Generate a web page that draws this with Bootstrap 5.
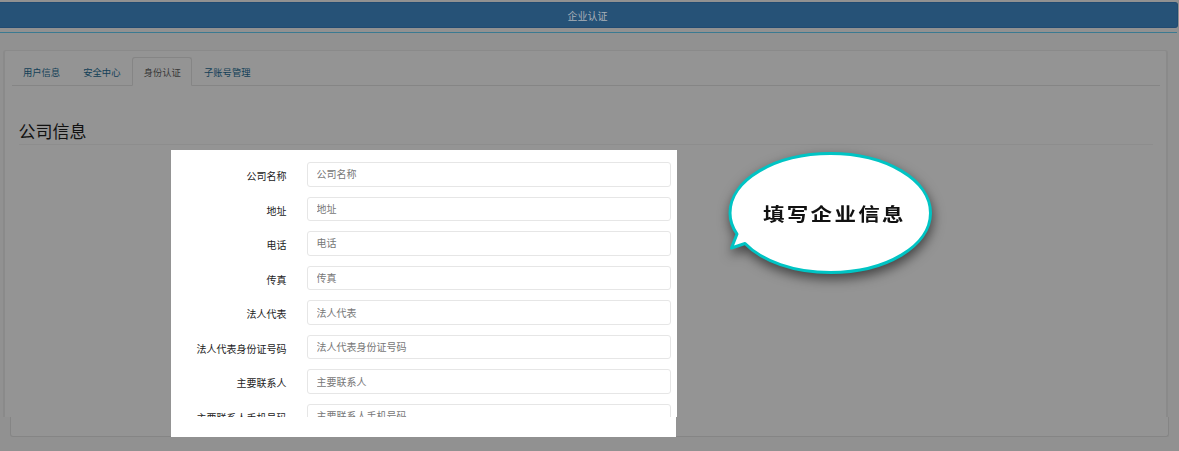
<!DOCTYPE html>
<html lang="zh-CN">
<head>
<meta charset="utf-8">
<meta name="viewport" content="width=device-width, initial-scale=1">
<title>企业认证</title>
<link href="https://cdn.jsdelivr.net/npm/bootstrap@5.3.0/dist/css/bootstrap.min.css" rel="stylesheet">
<style>
body{background:#919191;font-family:"Noto Sans CJK SC",sans-serif;font-size:10px;line-height:15px;color:#222;height:451px;overflow:hidden}
.title-bar{height:26px;margin:2px 1px 0 0;padding-right:2px;background:#265277;border:1px solid #214b72;border-left:0;border-radius:0 3px 3px 0;color:#a9b0b7;line-height:26px}
.title-rule{height:1px;margin:4px 2px 0 0;background:#3b7a91}
.panel-top{height:367px;margin:17px 11px 0 3px;background:#949494;border:solid #8a8a8a;border-width:1px 2px 0;border-radius:3px 3px 0 0;padding:6px 6px 0 7px}
.panel-bottom{height:20px;margin:0 10px 0 10px;background:#949494;border:1px solid #858585;border-top:0;border-radius:0 0 3px 3px;padding-left:160px}
.nav-tabs{--bs-nav-tabs-border-color:#858585;--bs-nav-tabs-border-radius:3px;--bs-nav-tabs-link-active-bg:#949494;--bs-nav-tabs-link-active-color:#383838;--bs-nav-tabs-link-active-border-color:#858585 #858585 #949494;--bs-nav-link-color:#123f57;--bs-nav-link-padding-x:10.2px;--bs-nav-link-padding-y:0;font-size:9.3px;height:29px;column-gap:.8px;margin-left:-.3px}
.nav-tabs .nav-link{height:29px;line-height:28px;margin-right:0;font-size:9.3px}
.section-title{font-size:17px;line-height:24px;margin:33px 7px 0 6.500px;height:26px;border-bottom:1px solid #8d8d8d;color:#111}
.form-area{width:506px;height:267px;margin:5px 0 0 159px;padding-top:12px;background:#fff;overflow:hidden}
.form-line{height:34.57px}
.form-line label{width:115.5px;color:#1c1c1c;padding-top:6px}
.form-line .form-control{width:364px;height:24.6px;margin-left:20.5px;padding:0 8.500px 1px;font-family:inherit;font-size:10px;line-height:20px;border:1px solid #e6e6e6;border-radius:3px}
.form-control::placeholder{color:#777;opacity:1}
.form-foot{width:505px;height:20px;background:#fff}
.bubble{left:714px;top:140px;width:236px;height:160px}
.bubble svg{display:block}
.bubble-text{left:49px;top:61px;width:150px;font-size:21.5px;line-height:24px;letter-spacing:2.3px;font-weight:700;color:#111;white-space:nowrap;transform:scaleY(.84)}
</style>
</head>
<body class="position-relative">
<header class="overflow-hidden">
  <div class="title-bar text-center">企业认证</div>
  <div class="title-rule"></div>
</header>
<main>
  <section class="panel-top">
    <ul class="nav nav-tabs">
      <li class="nav-item"><a class="nav-link" href="#">用户信息</a></li>
      <li class="nav-item"><a class="nav-link" href="#">安全中心</a></li>
      <li class="nav-item"><a class="nav-link active" href="#">身份认证</a></li>
      <li class="nav-item"><a class="nav-link" href="#">子账号管理</a></li>
    </ul>
    <h1 class="section-title fw-normal">公司信息</h1>
    <form class="form-area">
      <div class="form-line d-flex align-items-start"><label class="text-end" for="f1">公司名称</label><input class="form-control" id="f1" placeholder="公司名称"></div>
      <div class="form-line d-flex align-items-start"><label class="text-end" for="f2">地址</label><input class="form-control" id="f2" placeholder="地址"></div>
      <div class="form-line d-flex align-items-start"><label class="text-end" for="f3">电话</label><input class="form-control" id="f3" placeholder="电话"></div>
      <div class="form-line d-flex align-items-start"><label class="text-end" for="f4">传真</label><input class="form-control" id="f4" placeholder="传真"></div>
      <div class="form-line d-flex align-items-start"><label class="text-end" for="f5">法人代表</label><input class="form-control" id="f5" placeholder="法人代表"></div>
      <div class="form-line d-flex align-items-start"><label class="text-end" for="f6">法人代表身份证号码</label><input class="form-control" id="f6" placeholder="法人代表身份证号码"></div>
      <div class="form-line d-flex align-items-start"><label class="text-end" for="f7">主要联系人</label><input class="form-control" id="f7" placeholder="主要联系人"></div>
      <div class="form-line d-flex align-items-start"><label class="text-end" for="f8">主要联系人手机号码</label><input class="form-control" id="f8" placeholder="主要联系人手机号码"></div>
    </form>
  </section>
  <section class="panel-bottom"><div class="form-foot"></div></section>
</main>
<aside class="bubble position-absolute">
  <svg width="236" height="160" viewBox="0 0 236 160" style="filter:drop-shadow(1px 5px 6px rgba(0,0,0,.55))">
    <path d="M23 94 C18 87 16 80 16 73 C16 40 61 13.500 116.500 13.500 C172 13.500 216.500 40 216.500 73 C216.500 106 172 132.500 116.500 132.500 C80 132.500 48 121 31 103.500 L17.500 108 Z" fill="#fff" stroke="#00c4c4" stroke-width="3" stroke-linejoin="round"/>
  </svg>
  <div class="bubble-text position-absolute">填写企业信息</div>
</aside>
<script src="https://cdn.jsdelivr.net/npm/bootstrap@5.3.0/dist/js/bootstrap.bundle.min.js"></script>
</body>
</html>
